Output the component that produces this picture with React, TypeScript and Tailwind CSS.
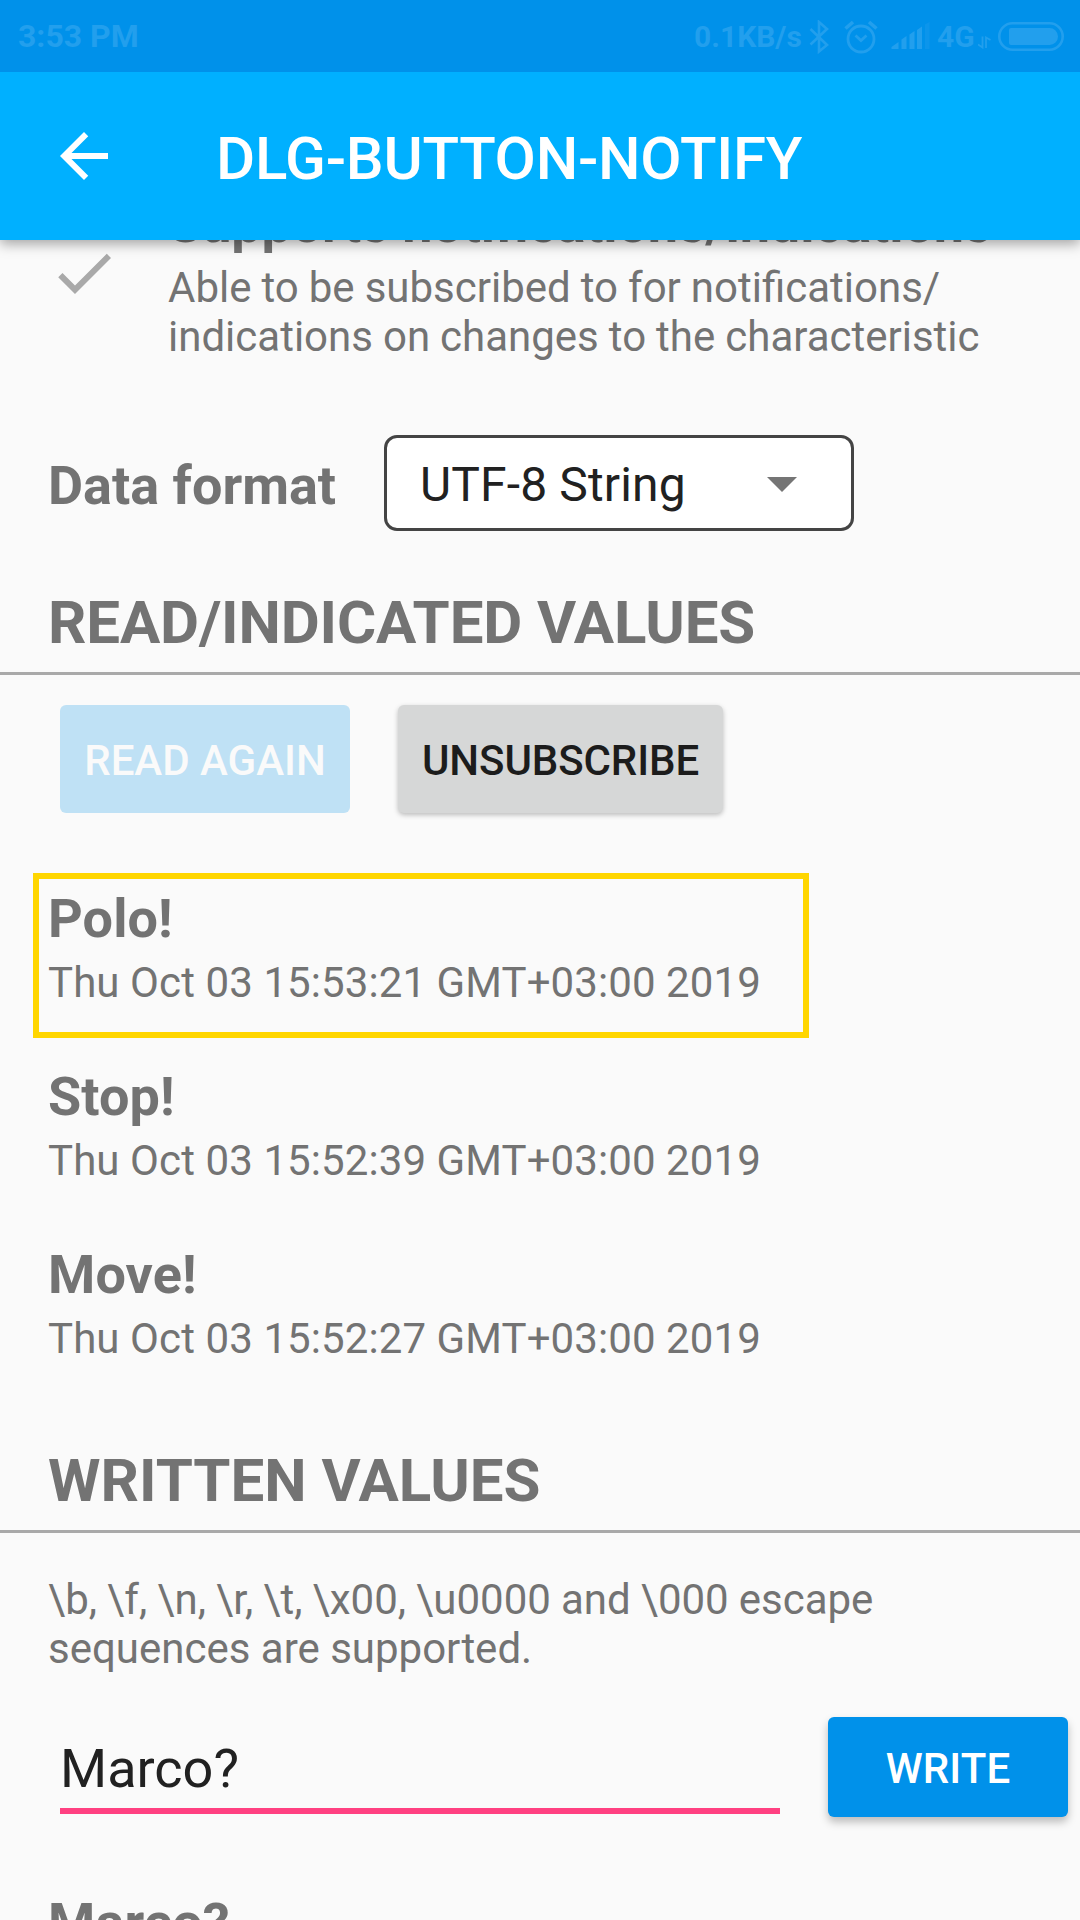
import React from "react";

const readValues = [
  { value: "Polo!", date: "Thu Oct 03 15:53:21 GMT+03:00 2019", highlighted: true },
  { value: "Stop!", date: "Thu Oct 03 15:52:39 GMT+03:00 2019", highlighted: false },
  { value: "Move!", date: "Thu Oct 03 15:52:27 GMT+03:00 2019", highlighted: false },
];

function StatusBar() {
  return (
    <div className="flex h-[72px] items-start bg-[#0091ea] text-[30px] leading-[39px] font-bold text-[#229fed]">
      <span className="mt-[17px] ml-[18px] text-[32px]">3:53 PM</span>
      <span className="mt-[17px] ml-auto w-[115px] whitespace-nowrap">0.1KB/s</span>
      <svg className="mt-[20px] h-[34px] w-[22px]" viewBox="0 0 22 34" fill="none" stroke="currentColor" strokeWidth="2.6">
        <path d="M1.5 9 18 25 10 31.5V2L18 9 1.5 24.5" />
      </svg>
      <svg className="mt-[20px] ml-[13px] h-[34px] w-[34px]" viewBox="0 0 34 34" fill="none" stroke="currentColor">
        <circle cx="17" cy="19" r="13" strokeWidth="2.8" />
        <path d="M11.5 15.5 17 20.5 22.5 15.5" strokeWidth="2.8" />
        <path d="M1.5 8.5 9 2M32.5 8.5 25 2" strokeWidth="3.6" />
      </svg>
      <svg className="mt-[22px] ml-[13px] h-[27px] w-[40px]" viewBox="0 0 40 27" fill="currentColor">
        <path d="M.5 27v-2L7.5 20v7zM10.5 17.5l5-3.5v13h-5zM18.5 12.5l5-3.5v18h-5zM26 8l5-3.5V27h-5z" />
        <path d="M34 2.5 38.5 0v27H34z" opacity=".35" />
      </svg>
      <span className="mt-[17px] ml-[6px] w-[41px]">4G</span>
      <svg className="mt-[36px] h-[13px] w-[13px]" viewBox="0 0 13 13" fill="none" stroke="currentColor" strokeWidth="1.8">
        <path d="M0 8.5 4.5 11.5V.5M12.5 4 8 1.5V12" />
      </svg>
      <svg className="mt-[22px] mr-[16px] ml-[7px] h-[29px] w-[66px]" viewBox="0 0 66 29">
        <rect x="1.3" y="1.3" width="63.4" height="26.4" rx="13.2" fill="none" stroke="currentColor" strokeWidth="2.6" />
        <path d="M13 6H51.5a8.5 8.5 0 0 1 0 17H13a2 2 0 0 1-2-2V8a2 2 0 0 1 2-2z" fill="currentColor" />
      </svg>
    </div>
  );
}

function SectionTitle({ children }: { children: React.ReactNode }) {
  return (
    <h2 className="border-b-3 border-[#a9a9a9] pb-[14px] pl-12 text-[60px] leading-[71px] font-bold">{children}</h2>
  );
}

export default function App() {
  return (
    <div className="h-[1920px] w-[1080px] overflow-hidden bg-[#fafafa] font-[Roboto,sans-serif] text-[#737373]">
      <header className="relative z-10 shadow-[0_4px_12px_rgba(0,0,0,0.35)]">
        <StatusBar />
        <div className="flex h-[168px] items-center bg-[#00b0ff] pl-12 text-white">
          <svg className="size-[72px]" viewBox="0 0 24 24" fill="currentColor">
            <path d="M20 11H7.830l5.590-5.590L12 4l-8 8 8 8 1.410-1.410L7.830 13H20v-2z" />
          </svg>
          <h1 className="ml-24 pt-[5px] text-[60px] leading-[71px] font-medium tracking-[-0.28px]">DLG-BUTTON-NOTIFY</h1>
        </div>
      </header>

      <main className="-mt-12">
        <div className="flex pl-12">
          <svg className="mt-[45px] size-[72px] text-[#a9a9a9]" viewBox="0 0 24 24" fill="currentColor">
            <path d="M9 16.170L4.830 12l-1.420 1.410L9 19 21 7l-1.410-1.410z" />
          </svg>
          <div className="ml-12 whitespace-nowrap">
            <div className="text-[54px] leading-[63px] font-bold tracking-[-0.12px]">Supports notifications/indications</div>
            <p className="mt-2 text-[42px] leading-[49px] [word-spacing:-0.4px]">
              Able to be subscribed to for notifications/
              <br />
              indications on changes to the characteristic
            </p>
          </div>
        </div>

        <div className="mt-[74px] flex items-start pl-12">
          <span className="mt-[19px] w-[336px] text-[54px] leading-[63px] font-bold">Data format</span>
          <div className="flex h-24 w-[470px] items-start justify-between rounded-[13px] border-3 border-[#444] bg-white pr-[54px] pl-[33px] text-[#212121]">
            <span className="mt-[18px] text-[48px] leading-[57px] tracking-[0.15px]">UTF-8 String</span>
            <svg className="mt-[39px] h-[15px] w-[30px] text-[#757575]" viewBox="0 0 30 15" fill="currentColor">
              <path d="M0 0h30L15 15z" />
            </svg>
          </div>
        </div>

        <section className="mt-14">
          <SectionTitle>
            <span className="tracking-[-0.14px]">READ/INDICATED VALUES</span>
          </SectionTitle>
          <div className="mt-[30px] flex gap-12 pl-[60px] text-[42px] leading-[49px] font-medium">
            <button className="flex h-[108px] w-[290px] justify-center rounded-md bg-[#bfe1f5] pt-[31px] text-[#fafafa]">READ AGAIN</button>
            <button className="flex h-[108px] w-[325px] justify-center rounded-md bg-[#d6d7d7] pt-[31px] tracking-[-0.1px] text-[#1c1c1c] shadow-[0_2px_5px_rgba(0,0,0,0.25)]">UNSUBSCRIBE</button>
          </div>
          <ul className="mt-[74px] flex flex-col gap-[58px] pl-12">
            {readValues.map((item) => (
              <li key={item.date} className="relative">
                {item.highlighted && (
                  <div className="absolute -top-[14px] -left-[15px] h-[165px] w-[776px] border-6 border-[#ffd600]" />
                )}
                <div className="text-[54px] leading-[63px] font-bold tracking-[0.1px]">{item.value}</div>
                <div className="mt-2 text-[42px] leading-[49px] tracking-[0.09px]">{item.date}</div>
              </li>
            ))}
          </ul>
        </section>

        <section className="mt-[82px]">
          <SectionTitle>WRITTEN VALUES</SectionTitle>
          <p className="mt-[42px] pl-12 text-[42px] leading-[49px]">
            <span className="[word-spacing:-0.4px]">{"\\b, \\f, \\n, \\r, \\t, \\x00, \\u0000 and \\000 escape"}</span>
            <br />
            sequences are supported.
          </p>
          <div className="mt-[44px] flex items-start justify-between pr-3 pl-[60px]">
            <div className="mt-5 w-[720px] border-b-6 border-[#ff4081] pb-2 text-[54px] leading-[63px] text-[#212121]">Marco?</div>
            <button className="flex h-[100px] w-[240px] justify-center rounded-md bg-[#0091ea] pt-[27px] text-[42px] leading-[49px] font-medium tracking-[0.1px] text-white shadow-[0_5px_8px_rgba(0,0,0,0.25)]">WRITE</button>
          </div>
          <div className="mt-[74px] pl-12 text-[54px] leading-[63px] font-bold tracking-[0.15px]">Marco?</div>
        </section>
      </main>
    </div>
  );
}
